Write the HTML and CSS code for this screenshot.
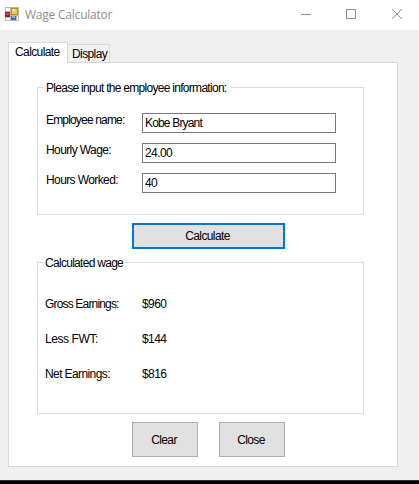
FILE: index.html
```
<!DOCTYPE html>
<html lang="en">
<head>
<meta charset="utf-8">
<title>Wage Calculator</title>
<link rel="stylesheet" href="styles.css">
</head>
<body>
<div class="window">
  <header class="titlebar">
    <svg class="app-icon" width="14" height="14" viewBox="0 0 14 14" shape-rendering="crispEdges">
      <path fill="#b9b9b9" d="M0 0h14v14H0z"/>
      <path fill="#fff" d="M1 1h4v3H1zM1 11h4v2H1zM12 9h1v4h-1z"/>
      <path fill="#a3211b" d="M0 5h5v5H0z"/>
      <path fill="#d8483c" d="M1 6h3v2H1z"/>
      <path fill="#b98d12" d="M6 1h7v7H6z"/>
      <path fill="#f5c842" d="M7 2h5v5H7z"/>
      <path fill="#fbe38c" d="M7 2h3v2H7z"/>
      <path fill="#3c6dc4" d="M6 9h5v4H6z"/>
      <path fill="#83aef0" d="M7 9h3v2H7z"/>
    </svg>
    <h1 class="title">Wage Calculator</h1>
    <svg class="controls" width="104" height="12" viewBox="0 0 104 12" fill="none" stroke="#8f8f8f">
      <path d="M1 6.5h10M46.5 1.5h9v9h-9z" shape-rendering="crispEdges"/>
      <path d="M92 1l10 10M102 1l-10 10"/>
    </svg>
  </header>
  <main class="client">
    <nav class="tabs">
      <div class="tab tab-active">Calculate</div>
      <div class="tab">Display</div>
    </nav>
    <section class="page">
      <fieldset class="group inputs">
        <legend>Please input the employee information:</legend>
        <div class="field"><label class="tight" for="name">Employee name:</label><input id="name" class="tight" value="Kobe Bryant"></div>
        <div class="field"><label for="wage">Hourly Wage:</label><input id="wage" value="24.00"></div>
        <div class="field"><label for="hours">Hours Worked:</label><input id="hours" value="40"></div>
      </fieldset>
      <button class="button primary">Calculate</button>
      <fieldset class="group results">
        <legend>Calculated wage</legend>
        <div class="result"><span class="tight">Gross Earnings:</span><output>$960</output></div>
        <div class="result"><span class="loose">Less FWT:</span><output>$144</output></div>
        <div class="result"><span>Net Earnings:</span><output>$816</output></div>
      </fieldset>
      <div class="actions">
        <button class="button">Clear</button>
        <button class="button">Close</button>
      </div>
    </section>
  </main>
</div>
</body>
</html>
```
FILE: styles.css
```
* { box-sizing: border-box; }
body {
  margin: 0;
  background: #000;
  color: #000;
  font: 12px/14px "Liberation Sans", Arial, sans-serif;
  letter-spacing: -0.6px;
  overflow: hidden;
}
.window { height: 481px; background: #efefef; border-bottom: 1px solid #303030; }
.titlebar {
  display: flex;
  align-items: center;
  height: 30px;
  padding: 0 15px 0 5px;
  background: #fff;
}
.app-icon { margin-bottom: 2px; }
.title {
  margin: 0 auto 0 6px;
  font: 12px/16px "Open Sans", "Noto Sans", sans-serif;
  letter-spacing: -0.22px;
  color: #8f8f8f;
}
.controls { margin-bottom: 2px; }
.client { padding: 12px 21px 0 8px; }
.tabs { display: flex; align-items: flex-end; height: 20px; }
.tab {
  width: 42px;
  height: 18px;
  padding: 2px 0 0 4px;
  border: 1px solid #d9d9d9;
  border-width: 1px 1px 0 0;
  background: #f0f0f0;
}
.tab-active {
  position: relative;
  width: 60px;
  height: 21px;
  margin-bottom: -1px;
  padding: 2px 0 0 6px;
  border-width: 1px 1px 0 1px;
  background: #fff;
}
.page {
  height: 405px;
  padding: 18px 33px 0 28px;
  border: 1px solid #d9d9d9;
  background: #fff;
}
.group {
  min-width: 0;
  margin: 0;
  padding: 0 0 0 8px;
  border: 1px solid #dcdcdc;
}
.group legend { height: 13px; margin-left: -2px; padding: 0 2px 0 1px; letter-spacing: -0.71px; white-space: nowrap; }
.inputs { height: 134px; }
.inputs legend { padding: 0 5px 0 2px; }
.field { display: flex; height: 20px; margin-top: 10px; }
.inputs legend + .field { margin-top: 19px; }
.field label { width: 96px; }
.field input {
  width: 194px;
  height: 20px;
  padding: 0 0 0 2px;
  border: 1px solid #7a7a7a;
  border-radius: 0;
  background: #fff;
  color: #000;
  font: inherit;
  letter-spacing: inherit;
}
.tight, .field input.tight { letter-spacing: -0.83px; }
.loose { letter-spacing: -0.42px; }
.button {
  display: block;
  width: 66px;
  height: 35px;
  padding: 0 2px 0 0;
  border: 1px solid #adadad;
  border-radius: 0;
  background: #e1e1e1;
  color: #000;
  font: inherit;
  letter-spacing: inherit;
}
.primary { width: 153px; height: 26px; margin: 8px 0 7px 95px; border: 2px solid #0078d7; }
.results { height: 158px; padding-left: 7px; }
.results legend { margin-left: -1px; }
.result { display: flex; height: 14px; margin-top: 21px; }
.results legend + .result { margin-top: 28px; }
.result span { width: 97px; }
.actions { display: flex; gap: 21px; margin: 8px 0 0 95px; }
```
